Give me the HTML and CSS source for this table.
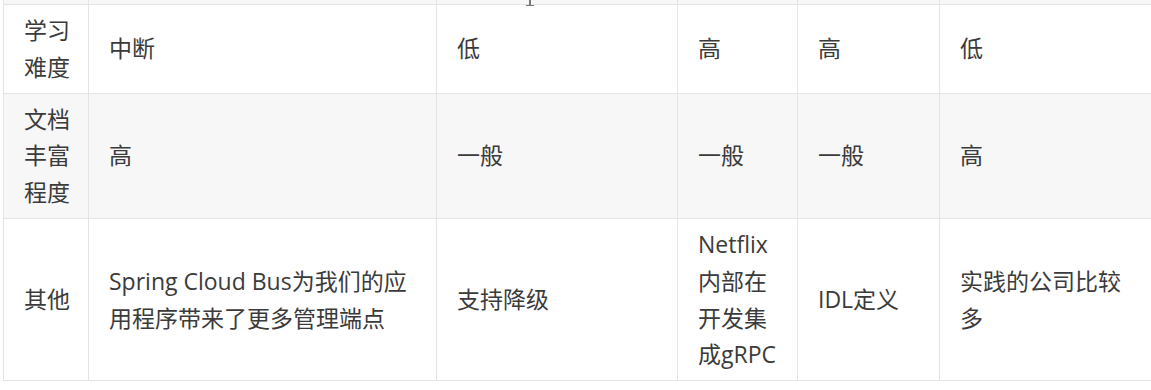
FILE: index.html
```html
<!DOCTYPE html>
<html lang="zh-CN">
<head>
<meta charset="utf-8">
<link rel="stylesheet" href="styles.css">
</head>
<body>
<div class="page">
  <span class="cursor"></span>
  <table class="cmp">
    <colgroup>
      <col class="c1"><col class="c2"><col class="c3"><col class="c4"><col class="c5"><col class="c6">
    </colgroup>
    <tbody>
      <tr class="prev"><td></td><td></td><td></td><td></td><td></td><td></td></tr>
      <tr>
        <td class="label">学习难度</td><td>中断</td><td>低</td><td>高</td><td>高</td><td>低</td>
      </tr>
      <tr class="alt">
        <td class="label">文档丰富程度</td><td>高</td><td>一般</td><td>一般</td><td>一般</td><td>高</td>
      </tr>
      <tr>
        <td class="label">其他</td><td>Spring Cloud Bus为我们的应用程序带来了更多管理端点</td><td>支持降级</td><td>Netflix内部在开发集成gRPC</td><td>IDL定义</td><td>实践的公司比较多</td>
      </tr>
    </tbody>
  </table>
</div>
</body>
</html>
```
FILE: styles.css
```css
html, body {
  margin: 0;
  padding: 0;
  background: #ffffff;
}
.page {
  position: relative;
  padding-left: 3px;
  overflow: hidden;
  height: 390px;
}
.cmp {
  border-collapse: collapse;
  table-layout: fixed;
  width: 1150px;
  font-family: "Open Sans", "Noto Sans CJK SC", sans-serif;
  font-size: 23px;
  line-height: 1.6;
  color: #3b3b3b;
  margin-top: -1px;
}
.c1 { width: 85px; }
.c2 { width: 348px; }
.c3 { width: 241px; }
.c4 { width: 120px; }
.c5 { width: 142px; }
.c6 { width: 214px; }
.cmp td {
  border: 1px solid #e4e4e4;
  padding: 7px 20px;
  vertical-align: middle;
  text-align: left;
  word-break: break-all;
}
.cmp td.label {
  padding: 7px 10px 7px 20px;
}
.cmp tr.prev td {
  padding: 0;
  height: 4px;
  background: #f7f7f7;
}
.cmp tr.alt td {
  background: #f7f7f7;
}
.cmp tr:nth-child(2) td { height: 73px; }
.cmp tr:nth-child(3) td { height: 109px; }
.cmp tr:nth-child(4) td { height: 147px; }
.cursor {
  position: absolute;
  left: 529px;
  top: 0;
  width: 2px;
  height: 6px;
  background: #777;
}
.cursor::after {
  content: "";
  position: absolute;
  left: -3px;
  bottom: 0;
  width: 8px;
  height: 1px;
  background: #777;
}
```
